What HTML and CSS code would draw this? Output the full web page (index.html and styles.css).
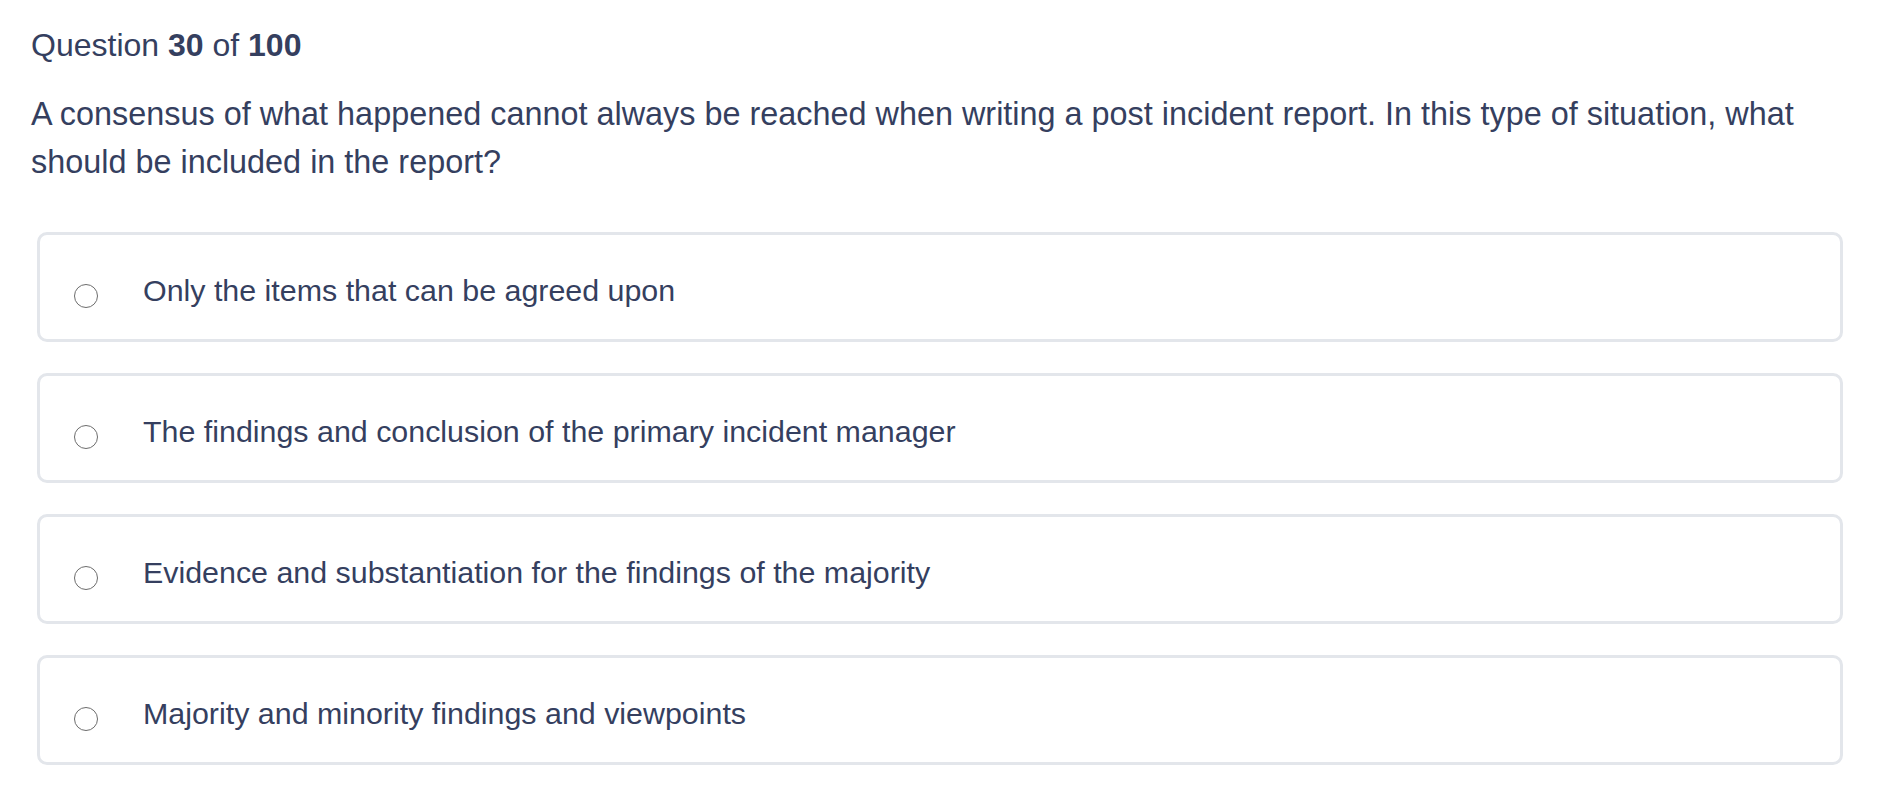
FILE: index.html
```html
<!DOCTYPE html>
<html lang="en">
<head>
<meta charset="utf-8">
<title>Question 30 of 100</title>
<link rel="stylesheet" href="styles.css">
</head>
<body>
<main class="quiz">
  <h1 class="counter">Question <strong>30</strong> of <strong>100</strong></h1>
  <p class="prompt">A consensus of what happened cannot always be reached when writing a post incident report. In this type of situation, what should be included in the report?</p>
  <div class="options">
    <label class="option"><span class="radio"></span><span class="option-text">Only the items that can be agreed upon</span></label>
    <label class="option"><span class="radio"></span><span class="option-text">The findings and conclusion of the primary incident manager</span></label>
    <label class="option"><span class="radio"></span><span class="option-text">Evidence and substantiation for the findings of the majority</span></label>
    <label class="option"><span class="radio"></span><span class="option-text">Majority and minority findings and viewpoints</span></label>
  </div>
</main>
</body>
</html>
```
FILE: styles.css
```css
html, body {
  margin: 0;
  padding: 0;
  background: #ffffff;
}

body {
  font-family: "Liberation Sans", Arial, Helvetica, sans-serif;
  color: #353f5f;
}

.quiz {
  padding: 21px 31px 0 31px;
}

.counter {
  margin: 0;
  font-size: 32px;
  line-height: 48px;
  font-weight: 400;
}

.counter strong {
  font-weight: 700;
}

.prompt {
  margin: 21px 0 0 0;
  font-size: 32.4px;
  line-height: 48px;
  max-width: 1790px;
}

.options {
  margin: 46px 6px 0 6px;
  display: flex;
  flex-direction: column;
  gap: 31px;
}

.option {
  display: flex;
  align-items: flex-start;
  height: 104px;
  box-sizing: content-box;
  border: 3px solid #e3e6eb;
  border-radius: 10px;
  padding: 0 0 0 34px;
  cursor: pointer;
}

.radio {
  flex: none;
  width: 22px;
  height: 22px;
  border: 1.5px solid #6c6c6c;
  border-radius: 50%;
  margin-top: 49px;
}

.option-text {
  margin: 31px 0 0 45px;
  font-size: 30.4px;
  line-height: 48px;
}
```
